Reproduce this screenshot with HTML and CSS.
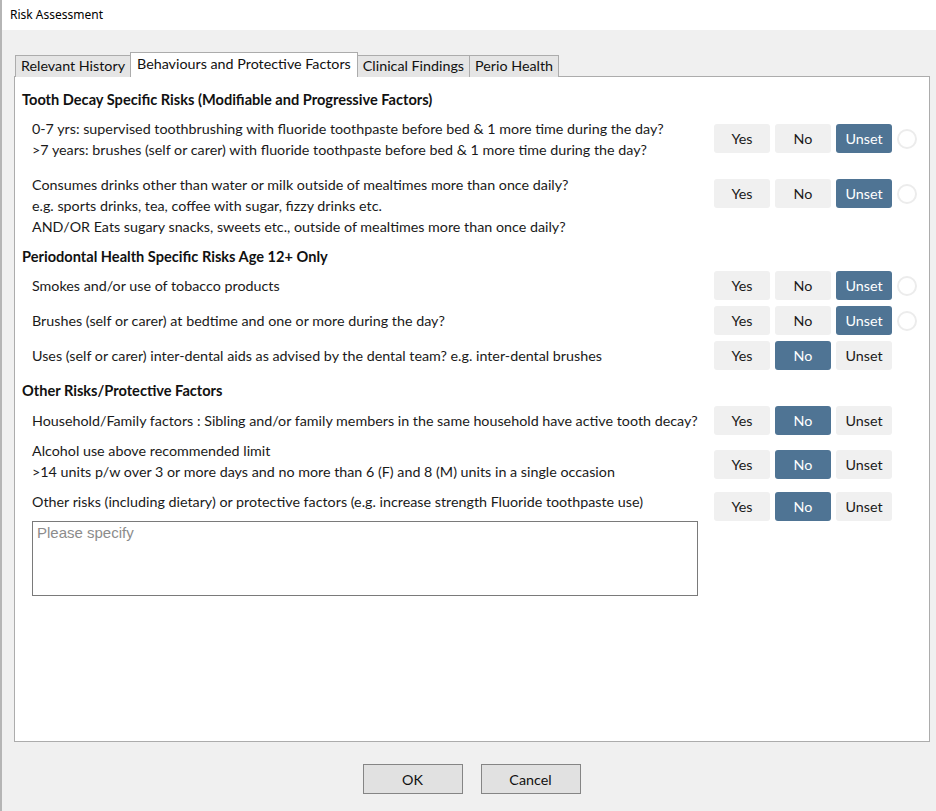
FILE: index.html
```html
<!DOCTYPE html>
<html lang="en">
<head>
    <meta charset="UTF-8">
    <title>Risk Assessment</title>
    <link rel="stylesheet" href="styles.css">
</head>
<body>
    <div class="window">
        <div class="titlebar">Risk Assessment</div>

        <div class="dialog">
            <div class="tabs">
                <div class="tab">Relevant History</div>
                <div class="tab active">Behaviours and Protective Factors</div>
                <div class="tab">Clinical Findings</div>
                <div class="tab">Perio Health</div>
            </div>

            <div class="panel">
                <h2 class="section-title">Tooth Decay Specific Risks (Modifiable and Progressive Factors)</h2>

                <div class="row multi first">
                    <div class="question">
                        0-7 yrs: supervised toothbrushing with fluoride toothpaste before bed &amp; 1 more time during the day?<br>
                        &gt;7 years: brushes (self or carer) with fluoride toothpaste before bed &amp; 1 more time during the day?
                    </div>
                    <div class="choices off6">
                        <button class="opt">Yes</button>
                        <button class="opt">No</button>
                        <button class="opt selected">Unset</button>
                        <span class="status"></span>
                    </div>
                </div>

                <div class="row multi second">
                    <div class="question">
                        Consumes drinks other than water or milk outside of mealtimes more than once daily?<br>
                        e.g. sports drinks, tea, coffee with sugar, fizzy drinks etc.<br>
                        AND/OR Eats sugary snacks, sweets etc., outside of mealtimes more than once daily?
                    </div>
                    <div class="choices off5">
                        <button class="opt">Yes</button>
                        <button class="opt">No</button>
                        <button class="opt selected">Unset</button>
                        <span class="status"></span>
                    </div>
                </div>

                <h2 class="section-title sec2">Periodontal Health Specific Risks Age 12+ Only</h2>

                <div class="row single top4">
                    <div class="question">Smokes and/or use of tobacco products</div>
                    <div class="choices">
                        <button class="opt">Yes</button>
                        <button class="opt">No</button>
                        <button class="opt selected">Unset</button>
                        <span class="status"></span>
                    </div>
                </div>

                <div class="row single">
                    <div class="question">Brushes (self or carer) at bedtime and one or more during the day?</div>
                    <div class="choices">
                        <button class="opt">Yes</button>
                        <button class="opt">No</button>
                        <button class="opt selected">Unset</button>
                        <span class="status"></span>
                    </div>
                </div>

                <div class="row single">
                    <div class="question">Uses (self or carer) inter-dental aids as advised by the dental team? e.g. inter-dental brushes</div>
                    <div class="choices">
                        <button class="opt">Yes</button>
                        <button class="opt selected">No</button>
                        <button class="opt">Unset</button>
                        <span class="status blank"></span>
                    </div>
                </div>

                <h2 class="section-title sec3">Other Risks/Protective Factors</h2>

                <div class="row single top5">
                    <div class="question">Household/Family factors : Sibling and/or family members in the same household have active tooth decay?</div>
                    <div class="choices">
                        <button class="opt">Yes</button>
                        <button class="opt selected">No</button>
                        <button class="opt">Unset</button>
                        <span class="status blank"></span>
                    </div>
                </div>

                <div class="row multi alcohol">
                    <div class="question">
                        Alcohol use above recommended limit<br>
                        &gt;14 units p/w over 3 or more days and no more than 6 (F) and 8 (M) units in a single occasion
                    </div>
                    <div class="choices off10">
                        <button class="opt">Yes</button>
                        <button class="opt selected">No</button>
                        <button class="opt">Unset</button>
                        <span class="status blank"></span>
                    </div>
                </div>

                <div class="row multi other">
                    <div class="question">Other risks (including dietary) or protective factors (e.g. increase strength Fluoride toothpaste use)</div>
                    <div class="choices off1">
                        <button class="opt">Yes</button>
                        <button class="opt selected">No</button>
                        <button class="opt">Unset</button>
                        <span class="status blank"></span>
                    </div>
                </div>

                <textarea class="notes" placeholder="Please specify"></textarea>
            </div>

            <div class="footer">
                <button class="dlg-btn">OK</button>
                <button class="dlg-btn">Cancel</button>
            </div>
        </div>
    </div>
</body>
</html>
```

FILE: styles.css
```css
* {
    margin: 0;
    padding: 0;
    box-sizing: border-box;
}

body {
    font-family: Lato, 'Noto Sans', sans-serif;
    font-size: 14.3px;
    color: #1a1a1a;
    background: #f0f0f0;
}

.window {
    width: 936px;
    height: 811px;
    border-left: 2px solid #b5b5b5;
    display: flex;
    flex-direction: column;
}

.titlebar {
    height: 30px;
    background: white;
    font-family: 'Noto Sans', sans-serif;
    font-size: 12px;
    line-height: 30px;
    padding-left: 8px;
    color: #000;
}

.dialog {
    flex: 1;
    padding: 22px 5px 0 12px;
}

/* tabs */
.tabs {
    display: flex;
    align-items: flex-end;
    height: 25px;
    padding-left: 1px;
    position: relative;
    z-index: 1;
}

.tab {
    height: 22px;
    line-height: 20px;
    padding: 0 5px;
    background: #e5e5e5;
    border: 1px solid #acacac;
    border-bottom: none;
    margin-right: -1px;
    color: #111;
}

.tab.active {
    height: 25px;
    line-height: 22px;
    background: white;
    padding: 0 6px;
    position: relative;
}

.panel {
    height: 666px;
    width: 916px;
    margin-top: -1px;
    background: white;
    border: 1px solid #acacac;
    padding: 12px 0 0 7px;
}

.section-title {
    font-size: 14.6px;
    font-weight: bold;
    line-height: 21px;
    color: #111;
}

.sec2 {
    margin-top: 9px;
}

.sec3 {
    margin-top: 10px;
}

/* rows */
.row {
    display: flex;
    justify-content: space-between;
    margin-top: 6px;
}

.row.single {
    align-items: center;
}

.row.multi {
    align-items: flex-start;
}

.row.first {
    margin-top: 8px;
}

.row.second {
    margin-top: 14px;
}

.row.top4 {
    margin-top: 4px;
}

.row.top5 {
    margin-top: 5px;
}

.row.alcohol {
    margin-top: 5px;
}

.row.other {
    margin-top: 9px;
}

.question {
    padding-left: 10px;
    line-height: 21px;
}

.choices {
    display: flex;
    align-items: center;
    gap: 5px;
    padding-right: 12px;
}

.off1 { margin-top: 1px; }
.off5 { margin-top: 5px; }
.off6 { margin-top: 6px; }
.off10 { margin-top: 10px; }

.opt {
    width: 56px;
    height: 29px;
    border: none;
    border-radius: 3px;
    background: #f0f0f0;
    font-family: Lato, 'Noto Sans', sans-serif;
    font-size: 14.3px;
    color: #1a1a1a;
}

.opt.selected {
    background: #4f7494;
    color: white;
}

.status {
    width: 20px;
    height: 20px;
    border: 2px solid #ececec;
    border-radius: 50%;
}

.status.blank {
    border-color: transparent;
}

.notes {
    display: block;
    width: 666px;
    height: 75px;
    margin-left: 10px;
    border: 1px solid #7a7a7a;
    padding: 2px 4px;
    font-family: 'Liberation Sans', Arial, sans-serif;
    font-size: 15px;
    resize: none;
}

.notes::placeholder {
    color: #8c8c8c;
}

/* dialog buttons */
.footer {
    display: flex;
    justify-content: center;
    gap: 18px;
    margin-top: 22px;
    padding-right: 2px;
}

.dlg-btn {
    width: 100px;
    height: 30px;
    background: #e1e1e1;
    border: 1px solid #858585;
    font-family: Lato, 'Noto Sans', sans-serif;
    font-size: 14.3px;
    color: #111;
}
```
